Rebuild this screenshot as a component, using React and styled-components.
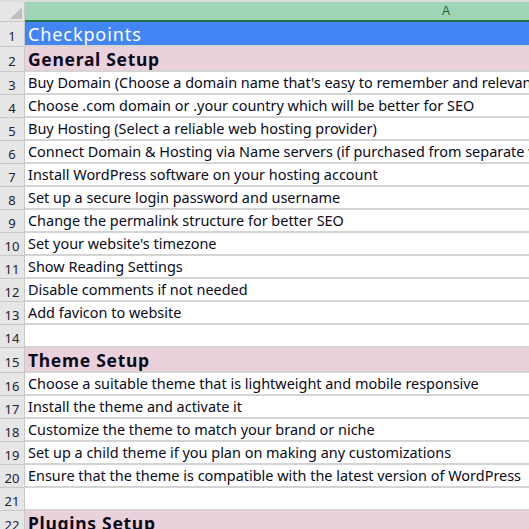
import React from "react";
import styled, { createGlobalStyle } from "styled-components";

const rows = [
  { text: "Checkpoints", kind: "title" },
  { text: "General Setup", kind: "section" },
  { text: "Buy Domain (Choose a domain name that's easy to remember and relevant to your niche)" },
  { text: "Choose .com domain or .your country which will be better for SEO" },
  { text: "Buy Hosting (Select a reliable web hosting provider)" },
  { text: "Connect Domain & Hosting via Name servers (if purchased from separate vendors)" },
  { text: "Install WordPress software on your hosting account" },
  { text: "Set up a secure login password and username" },
  { text: "Change the permalink structure for better SEO" },
  { text: "Set your website's timezone" },
  { text: "Show Reading Settings" },
  { text: "Disable comments if not needed" },
  { text: "Add favicon to website" },
  { text: "" },
  { text: "Theme Setup", kind: "section" },
  { text: "Choose a suitable theme that is lightweight and mobile responsive" },
  { text: "Install the theme and activate it" },
  { text: "Customize the theme to match your brand or niche" },
  { text: "Set up a child theme if you plan on making any customizations" },
  { text: "Ensure that the theme is compatible with the latest version of WordPress" },
  { text: "" },
  { text: "Plugins Setup", kind: "section" },
];

const GlobalStyle = createGlobalStyle`
  html, body {
    margin: 0;
    padding: 0;
    background: #ffffff;
    overflow: hidden;
  }
  body {
    font-family: "Noto Sans", "Open Sans", sans-serif;
  }
`;

function App() {
  return (
    <>
      <GlobalStyle />
      <Sheet>
        <HeaderRow>
          <Corner>
            <svg width="12" height="12" viewBox="0 0 12 12">
              <polygon points="12,0 12,12 0,12" fill="#bfbfbf" />
            </svg>
          </Corner>
          <ColHead>A</ColHead>
        </HeaderRow>
        {rows.map((row, i) => (
          <Row key={i} $tall={!!row.kind}>
            <RowNum>{i + 1}</RowNum>
            <Cell $kind={row.kind}>{row.text}</Cell>
          </Row>
        ))}
      </Sheet>
    </>
  );
}

const Sheet = styled.div`
  width: 529px;
  height: 529px;
  overflow: hidden;
  background: #ffffff;
`;

const HeaderRow = styled.div`
  display: flex;
  height: 22px;
  border-top: 2px solid #dcdcdc;
  box-sizing: border-box;
`;

const Corner = styled.div`
  width: 25px;
  flex-shrink: 0;
  background: #e6e6e6;
  border-right: 1px solid #c8c8c8;
  border-bottom: 1px solid #c8c8c8;
  display: flex;
  align-items: flex-end;
  justify-content: flex-end;
  padding: 0 2px 2px 0;
  box-sizing: border-box;
`;

const ColHead = styled.div`
  width: 842px;
  flex-shrink: 0;
  background: #9fd5b7;
  border-bottom: 2px solid #217346;
  color: #1e5c3a;
  font-family: "Liberation Sans", Arial, sans-serif;
  font-size: 12px;
  display: flex;
  align-items: center;
  justify-content: center;
  box-sizing: border-box;
`;

const Row = styled.div`
  display: flex;
  height: ${(p) => (p.$tall ? "25px" : "23px")};
  box-sizing: border-box;
`;

const RowNum = styled.div`
  width: 25px;
  flex-shrink: 0;
  background: #e6e6e6;
  border-right: 1px solid #c8c8c8;
  border-bottom: 1px solid #c8c8c8;
  color: #222233;
  font-size: 13px;
  display: flex;
  align-items: center;
  justify-content: center;
  padding-top: 3px;
  box-sizing: border-box;
`;

const cellBg = { title: "#4285f4", section: "#ead1dc" };
const cellSize = { title: "18px", section: "17.5px" };
const cellSpacing = { title: "0.9px", section: "0.7px" };

const Cell = styled.div`
  width: 842px;
  flex-shrink: 0;
  background: ${(p) => cellBg[p.$kind] || "#ffffff"};
  border-bottom: 2px solid #d4d4d4;
  color: ${(p) => (p.$kind === "title" ? "#ffffff" : "#0a0a1a")};
  font-size: ${(p) => cellSize[p.$kind] || "14.45px"};
  font-weight: ${(p) => (p.$kind === "section" ? 700 : 400)};
  letter-spacing: ${(p) => cellSpacing[p.$kind] || "0"};
  padding-left: 3px;
  white-space: nowrap;
  display: flex;
  align-items: center;
  box-sizing: border-box;
`;

export default App;
